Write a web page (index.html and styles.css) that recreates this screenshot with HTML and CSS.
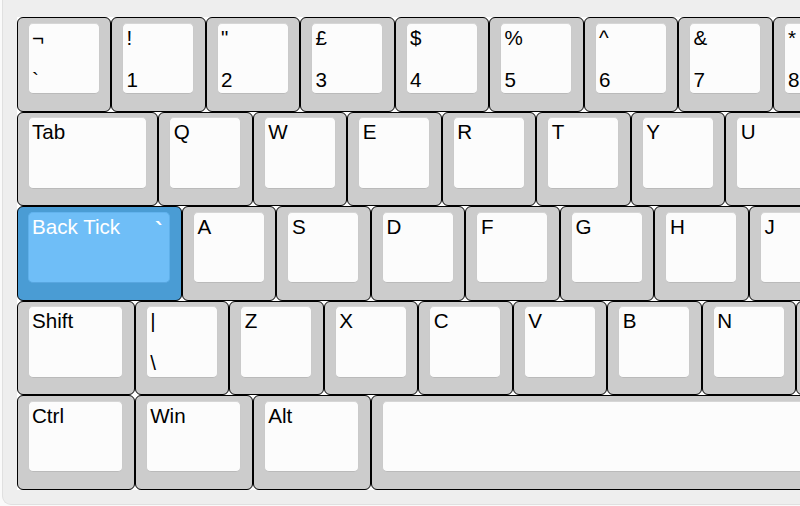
FILE: index.html
```html
<!DOCTYPE html>
<html>
<head>
<meta charset="utf-8">
<link rel="stylesheet" href="styles.css">
</head>
<body>
<div class="board">
  <div class="keys">
    <div class="row">
      <div class="key w1"><div class="cap"><span>¬</span><span>`</span></div></div>
      <div class="key w1"><div class="cap"><span>!</span><span>1</span></div></div>
      <div class="key w1"><div class="cap"><span>"</span><span>2</span></div></div>
      <div class="key w1"><div class="cap"><span>£</span><span>3</span></div></div>
      <div class="key w1"><div class="cap"><span>$</span><span>4</span></div></div>
      <div class="key w1"><div class="cap"><span>%</span><span>5</span></div></div>
      <div class="key w1"><div class="cap"><span>^</span><span>6</span></div></div>
      <div class="key w1"><div class="cap"><span>&amp;</span><span>7</span></div></div>
      <div class="key w1"><div class="cap"><span>*</span><span>8</span></div></div>
      <div class="key w1"><div class="cap"><span>(</span><span>9</span></div></div>
    </div>
    <div class="row">
      <div class="key w15"><div class="cap"><span>Tab</span></div></div>
      <div class="key w1"><div class="cap"><span>Q</span></div></div>
      <div class="key w1"><div class="cap"><span>W</span></div></div>
      <div class="key w1"><div class="cap"><span>E</span></div></div>
      <div class="key w1"><div class="cap"><span>R</span></div></div>
      <div class="key w1"><div class="cap"><span>T</span></div></div>
      <div class="key w1"><div class="cap"><span>Y</span></div></div>
      <div class="key w1"><div class="cap"><span>U</span></div></div>
      <div class="key w1"><div class="cap"><span>I</span></div></div>
    </div>
    <div class="row">
      <div class="key w175 blue"><div class="cap"><div class="top"><span>Back Tick</span><span class="tick">`</span></div></div></div>
      <div class="key w1"><div class="cap"><span>A</span></div></div>
      <div class="key w1"><div class="cap"><span>S</span></div></div>
      <div class="key w1"><div class="cap"><span>D</span></div></div>
      <div class="key w1"><div class="cap"><span>F</span></div></div>
      <div class="key w1"><div class="cap"><span>G</span></div></div>
      <div class="key w1"><div class="cap"><span>H</span></div></div>
      <div class="key w1"><div class="cap"><span>J</span></div></div>
      <div class="key w1"><div class="cap"><span>K</span></div></div>
    </div>
    <div class="row">
      <div class="key w125"><div class="cap"><span>Shift</span></div></div>
      <div class="key w1"><div class="cap"><span>|</span><span>\</span></div></div>
      <div class="key w1"><div class="cap"><span>Z</span></div></div>
      <div class="key w1"><div class="cap"><span>X</span></div></div>
      <div class="key w1"><div class="cap"><span>C</span></div></div>
      <div class="key w1"><div class="cap"><span>V</span></div></div>
      <div class="key w1"><div class="cap"><span>B</span></div></div>
      <div class="key w1"><div class="cap"><span>N</span></div></div>
      <div class="key w1"><div class="cap"><span>M</span></div></div>
    </div>
    <div class="row">
      <div class="key w125"><div class="cap"><span>Ctrl</span></div></div>
      <div class="key w125"><div class="cap"><span>Win</span></div></div>
      <div class="key w125"><div class="cap"><span>Alt</span></div></div>
      <div class="key w625"><div class="cap"></div></div>
    </div>
  </div>
</div>
</body>
</html>
```
FILE: styles.css
```css
html, body {
  margin: 0;
  padding: 0;
  overflow: hidden;
  background: #fafafa;
  height: 506px;
}
.board {
  margin-left: 2px;
  width: 1200px;
  background: #eeeeee;
  border: 1px solid #e0e0e0;
  border-top: none;
  border-radius: 0 0 9px 9px;
  padding: 17px 0 14px 13.5px;
  box-sizing: content-box;
}
.keys {
  background: #ffffff;
  display: flex;
  flex-direction: column;
  width: max-content;
}
.row {
  display: flex;
  height: 94.5px;
}
.key {
  flex: none;
  box-sizing: border-box;
  height: 94.5px;
  border: 1px solid #000;
  border-radius: 6px;
  background: #cccccc;
  padding: 4.5px 10.5px 16.5px 10px;
  font-family: "Liberation Sans", Arial, sans-serif;
  font-size: 20.6px;
  color: #000;
}
.w1 { width: 94.5px; }
.w125 { width: 118.125px; }
.w15 { width: 141.75px; }
.w175 { width: 165.375px; }
.w625 { width: 590.625px; }
.cap {
  box-sizing: border-box;
  height: 100%;
  background: #fcfcfc;
  border: 1px solid;
  border-color: #d6d6d6 #cacaca #bababa #cacaca;
  border-radius: 5px;
  padding: 2px 4px 2.5px 3.5px;
  display: flex;
  flex-direction: column;
  justify-content: space-between;
  line-height: 23px;
}
.blue {
  background: #4a9cd4;
}
.blue .cap {
  background: #6fbef7;
  border-color: #62b3ee #5fb0ea #58a6df #5fb0ea;
  color: #ffffff;
}
.top {
  display: flex;
  justify-content: space-between;
}
.tick {
  font-family: "DejaVu Sans", sans-serif;
  font-weight: bold;
  font-size: 22px;
  margin-right: 0;
  padding-top: 4px;
}
```
